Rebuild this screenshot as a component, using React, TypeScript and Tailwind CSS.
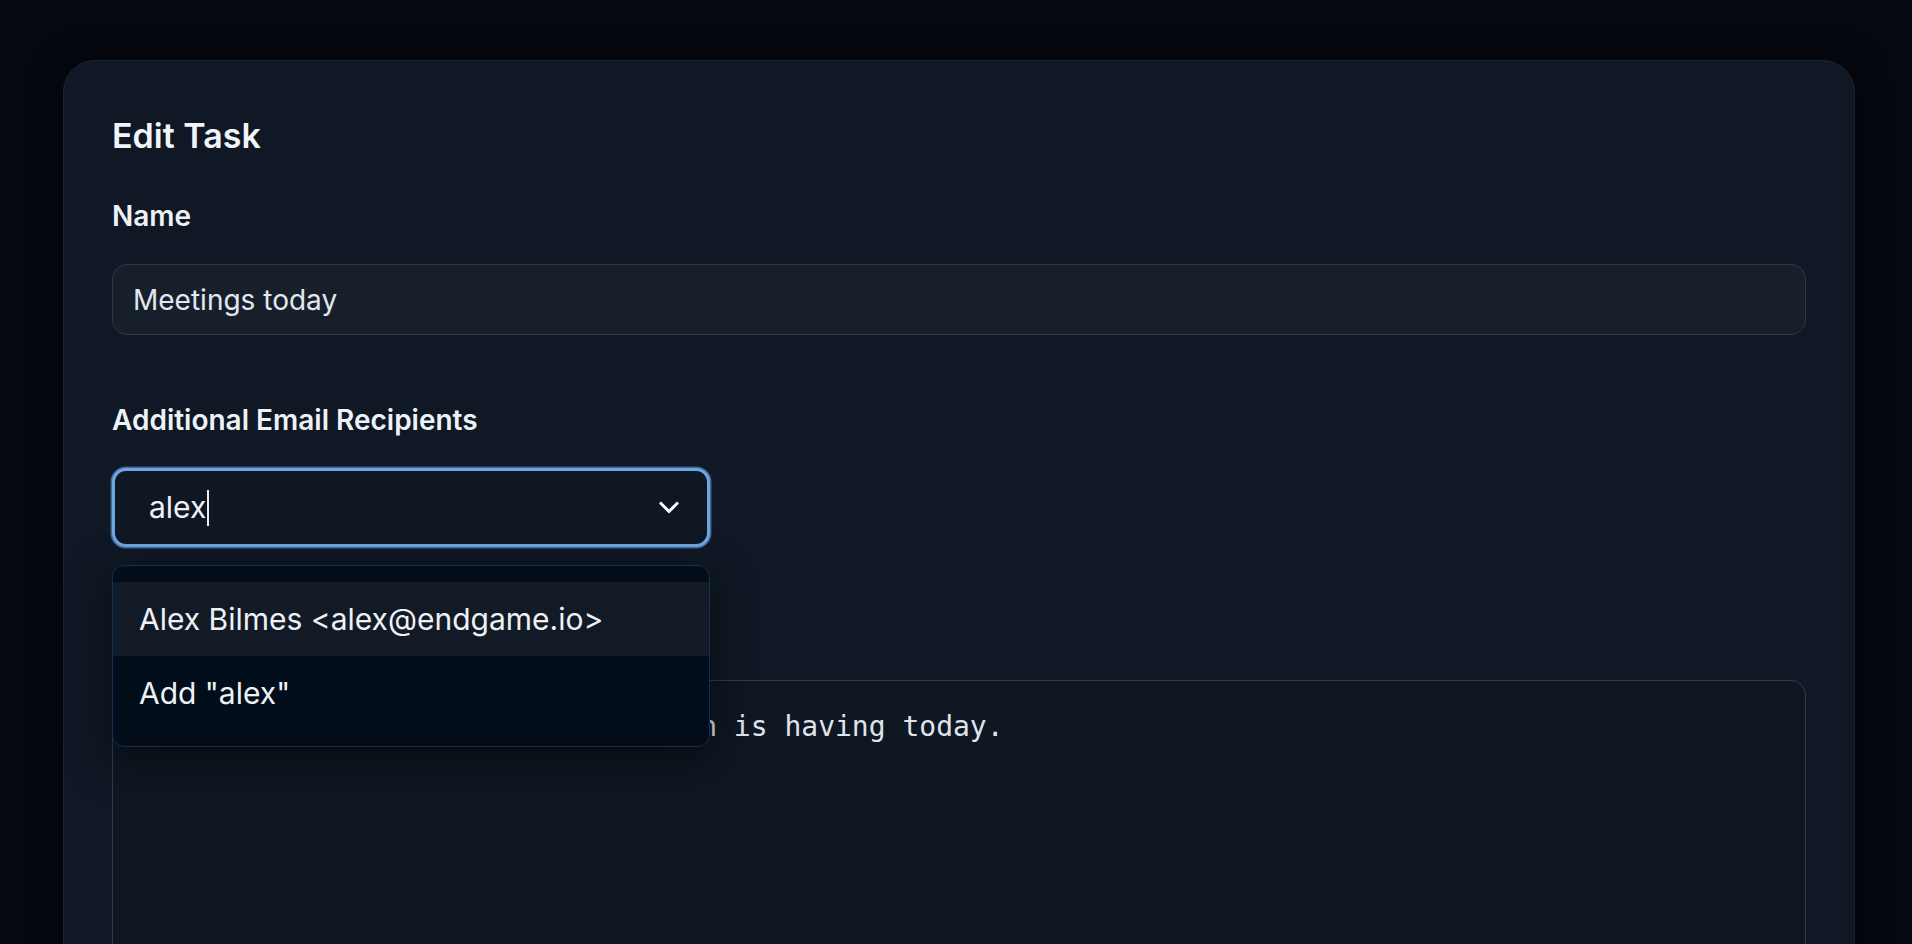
import React from "react";

export default function App() {
  return (
    <div className="h-[944px] overflow-hidden bg-[#05080f] pt-[60px] pl-[63px] pr-[57px] font-['Inter',sans-serif]">
      <div className="h-[1100px] rounded-[32px] border border-[#1b2431] bg-[#0f1824] px-[48px] pt-[55px] shadow-[0_0_30px_rgba(0,0,0,0.6)]">
        <h1 className="text-[34px] leading-[40px] font-semibold text-[#f1f4f8]">Edit Task</h1>

        <div className="mt-[42px] text-[28px] leading-[36px] font-semibold text-[#eef2f7]">Name</div>
        <div className="mt-[30px] flex h-[71px] items-center rounded-[15px] border border-[#2d3849] bg-[#171f2b] pl-[20px] text-[28px] text-[#e2e8f0]">
          Meetings today
        </div>

        <div className="mt-[67px] text-[28px] leading-[36px] font-semibold text-[#eef2f7]">
          Additional Email Recipients
        </div>

        <div className="relative mt-[30px] w-[598px]">
          <div className="flex h-[79px] items-center justify-between rounded-[14px] border-[3px] border-[#6ca7e2] bg-[#0f1722] pl-[34px] pr-[28px] shadow-[0_0_0_1.5px_rgba(96,158,222,0.6)]">
            <div className="flex items-center text-[30px] text-[#eef2f7]">
              <span>alex</span>
              <span className="ml-[1px] h-[36px] w-[2px] bg-[#e8edf3]" />
            </div>
            <svg width="20" height="13" viewBox="0 0 20 13" fill="none">
              <polyline points="2,2.5 10,10.5 18,2.5" stroke="#ffffff" strokeWidth="3" strokeLinecap="square" strokeLinejoin="miter" />
            </svg>
          </div>

          <div className="absolute left-0 top-[calc(100%+18px)] z-10 w-[598px] overflow-hidden rounded-[12px] border border-[#11305a] bg-[#040c18] py-[16px] shadow-[0_12px_40px_rgba(0,0,0,0.55)]">
            <div className="flex h-[74px] items-center bg-[#121a25] pl-[26px] text-[30px] text-[#eef2f7]">
              Alex Bilmes &lt;alex@endgame.io&gt;
            </div>
            <div className="flex h-[74px] items-center bg-[#020d1b] pl-[26px] text-[30px] text-[#eef2f7]">
              Add "alex"
            </div>
          </div>
        </div>

        <div className="mt-[67px] h-[36px]" />
        <div className="mt-[30px] h-[320px] rounded-[15px] border border-[#303c4f] bg-[#0e1722] pl-[14px] pr-[20px] pt-[25px] font-['DejaVu_Sans_Mono',monospace] text-[28px] leading-[42px] text-[#dfe4eb]">
          A list of meetings that each person is having today.
        </div>
      </div>
    </div>
  );
}
